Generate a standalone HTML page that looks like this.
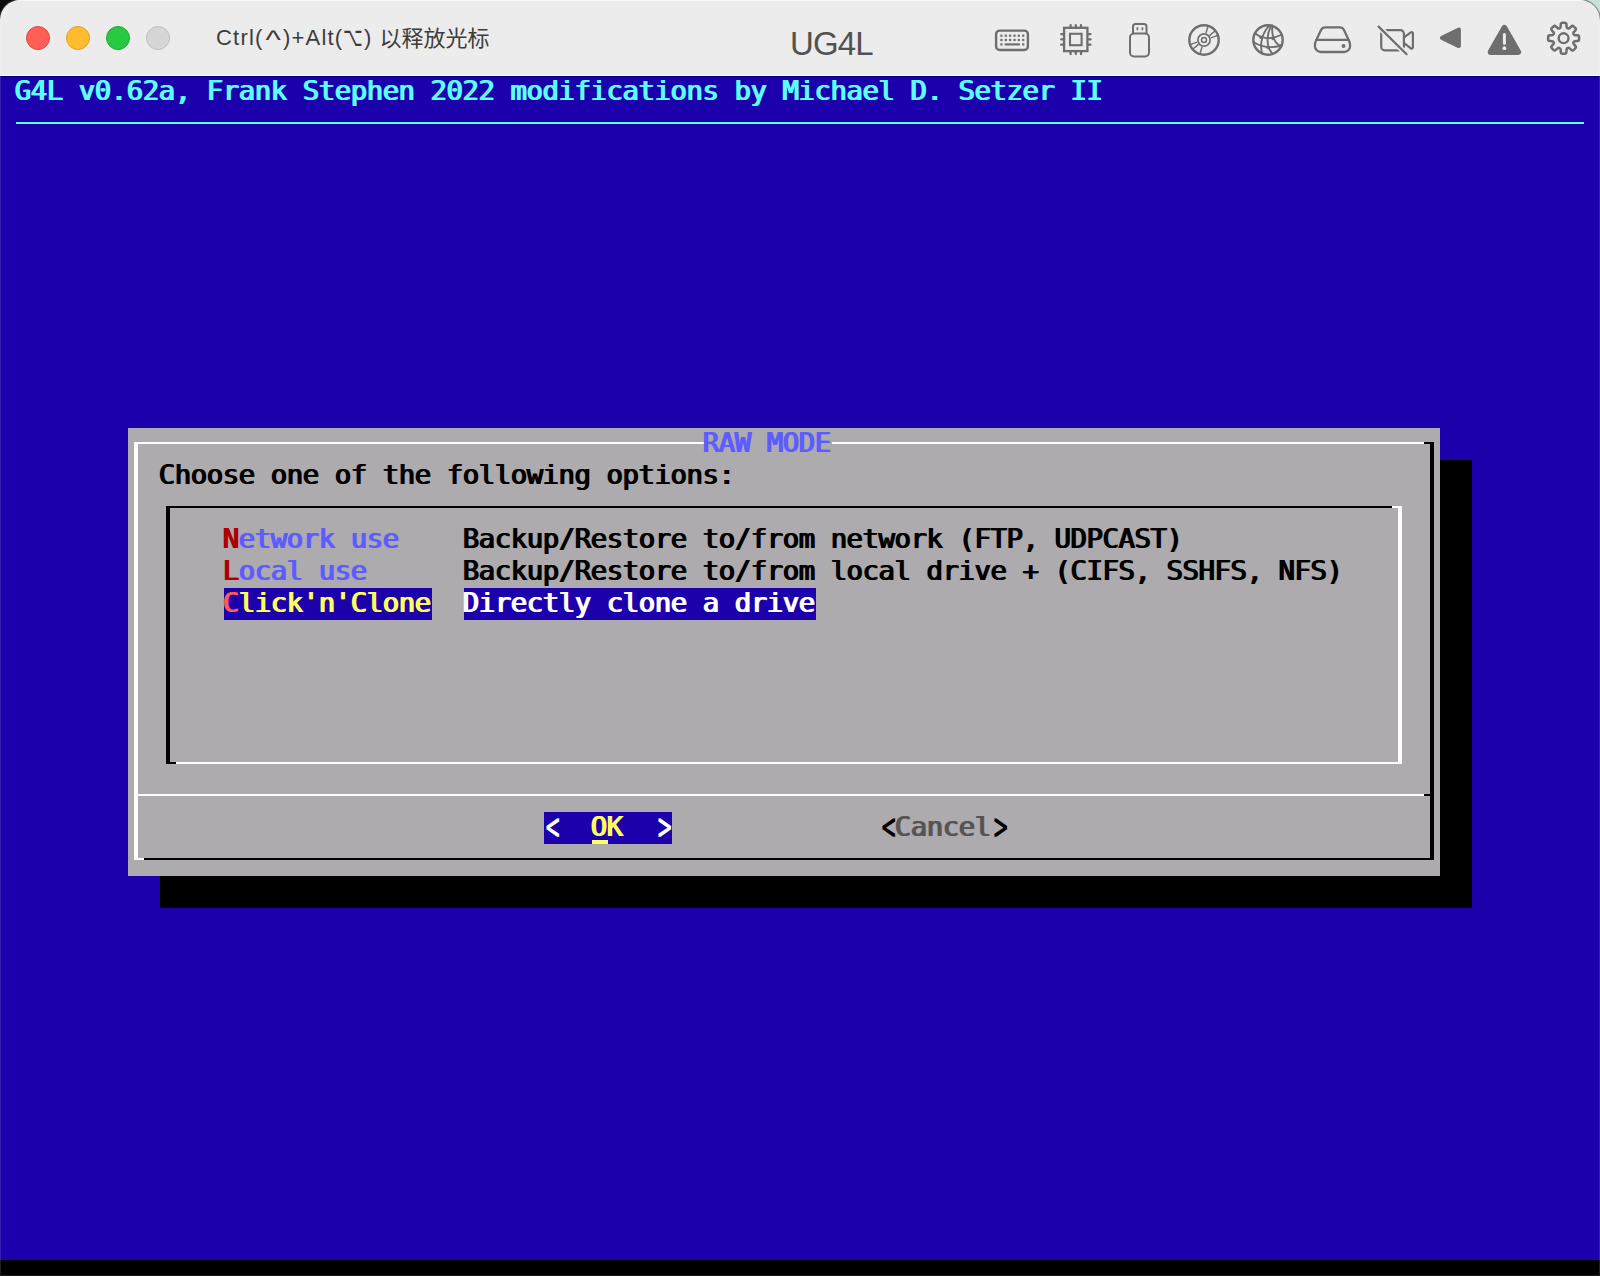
<!DOCTYPE html>
<html lang="zh-CN">
<head>
<meta charset="utf-8">
<title>UG4L</title>
<style>
html,body{margin:0;padding:0;}
body{width:1600px;height:1276px;background:#0c0c0c;overflow:hidden;position:relative;}
#tr{position:absolute;right:0;top:0;width:24px;height:24px;background:#cbdfd6;}
#win{position:absolute;left:0;top:0;width:1600px;height:1276px;background:#000;border-radius:20px 20px 0 0;overflow:hidden;box-shadow:0 0 0 1px rgba(70,90,80,.55);}
#bar{position:absolute;left:0;top:0;width:1600px;height:76px;background:#ececec;box-shadow:inset 0 1px 0 #f9f9f9,inset 0 -1px 0 #fbfbf6;}
.tl{position:absolute;top:26px;width:24px;height:24px;border-radius:50%;box-sizing:border-box;}
#hint{position:absolute;left:216px;top:24px;height:28px;line-height:28px;font-family:"Liberation Sans","Noto Sans CJK SC",sans-serif;font-size:22px;color:#3c3c3c;white-space:nowrap;}
.hs{position:absolute;top:0;}
.sym{font-family:"DejaVu Sans","Liberation Sans",sans-serif;}
#ttl{position:absolute;left:790px;top:24.600px;height:38px;line-height:38px;font-family:"Liberation Sans",sans-serif;font-size:33px;letter-spacing:-0.900px;color:#525252;white-space:nowrap;}
#icons{position:absolute;left:980px;top:0;width:620px;height:76px;}
#scr{position:absolute;left:0;top:76px;width:1600px;height:1184px;background:#1c00ab;overflow:hidden;}
.t{position:absolute;height:32px;line-height:30px;margin:0;white-space:pre;font-family:"DejaVu Sans Mono","Liberation Mono",monospace;font-weight:normal;font-size:27.4px;letter-spacing:-0.496px;text-indent:-2px;text-shadow:1.500px 0 0 currentColor;}
.ab{display:inline-block;text-indent:0;transform:translateX(2px) scale(0.8,1.42);transform-origin:50% 15.200px;}
.b{position:absolute;}
.w{background:#fff;}
.k{background:#000;}
</style>
</head>
<body>
<div id="tr"></div>
<div id="win">
<div id="bar">
<div class="tl" style="left:26px;background:#ff5f57;border:1px solid #e2463f;"></div>
<div class="tl" style="left:66px;background:#febc2e;border:1px solid #e0a028;"></div>
<div class="tl" style="left:106px;background:#28c840;border:1px solid #1fab2f;"></div>
<div class="tl" style="left:146px;background:#d6d6d6;border:1px solid #c0c0c0;"></div>
<div id="hint"><span id="h1" class="hs" style="left:0;letter-spacing:1.2px;">Ctrl(</span><span id="h2" class="hs" style="left:49.600px;top:6px;font-size:32.600px;transform:scaleY(0.77);transform-origin:0 0;">^</span><span id="h3" class="hs" style="left:67px;letter-spacing:1.2px;">)+Alt(</span><span id="h4" class="hs sym" style="left:127.1px;top:-3.2px;font-size:24px;transform:scale(0.71,1.13);transform-origin:0 0;">⌥</span><span id="h5" class="hs" style="left:148px;">)</span><span id="h6" class="hs" style="left:163.500px;top:1px;">以释放光标</span></div>
<div id="ttl">UG4L</div>
<svg id="icons" viewBox="980 0 620 76">
<g fill="none" stroke="#6e6e6e" stroke-width="2" stroke-linecap="round" stroke-linejoin="round">
<!-- keyboard -->
<rect x="996.100" y="30.600" width="31.800" height="19.400" rx="3.600" stroke-width="2.400"/>
<!-- cpu -->
<rect x="1064.100" y="27.800" width="23.300" height="23.300" stroke-width="2.300" stroke-linejoin="miter"/>
<rect x="1070" y="33.800" width="11.600" height="11.400" stroke-width="2.100" stroke-linejoin="miter"/>
<g stroke-linecap="round" stroke-width="2.300">
<path d="M1070.600 25.200v2M1075.800 25.200v2M1081 25.200v2M1070.600 52v2M1075.800 52v2M1081 52v2"/>
<path d="M1061.200 34.100h2M1061.200 39.400h2M1061.200 44.700h2M1088.500 34.100h2M1088.500 39.400h2M1088.500 44.700h2"/>
</g>
<!-- usb -->
<path d="M1133 33v-6.5a2.5 2.5 0 0 1 2.5-2.500h8.500a2.500 2.500 0 0 1 2.500 2.500v6.500"/>
<rect x="1130" y="33.500" width="19" height="23" rx="4"/>
<path d="M1137.400 27.200v3M1142.400 27.200v3" stroke-width="1.600" stroke-linecap="butt"/>
<!-- disc -->
<circle cx="1204" cy="40" r="14.700" stroke-width="2.400"/>
<circle cx="1204" cy="40" r="6.100" stroke-width="1.700"/>
<circle cx="1204" cy="40" r="2.500" stroke-width="1.500"/>
<g stroke-width="1.400" stroke-linecap="butt">
<path d="M1205.900 33.300L1207.900 26.500M1209.400 35.600L1214.700 31.300M1210.700 37.800L1217.200 35.700"/>
<path d="M1202.100 46.700L1200.100 53.500M1198.600 44.400L1193.300 48.700M1197.300 42.200L1190.800 44.300"/>
</g>
<!-- globe -->
<circle cx="1268" cy="40" r="14.700" stroke-width="2.400"/>
<g stroke-width="1.900">
<path d="M1269.600 25.400C1263 32 1259 43 1262.200 53.500"/>
<path d="M1271.100 25.400C1266.500 35 1266 46 1271.900 53.100"/>
<path d="M1272.300 25.400C1271.500 36 1274 43 1281 46.300"/>
<path d="M1255 33.200Q1266 42 1281 35"/>
<path d="M1253.900 42.200Q1266 50 1281.500 45.500"/>
</g>
<!-- drive -->
<path d="M1321 30Q1322.300 27.300 1325.200 27.300H1339.800Q1342.700 27.300 1344 30L1349.300 41.400Q1350.100 43.200 1350.100 45.400V46a6 6 0 0 1 -6 6H1320.900a6 6 0 0 1 -6 -6V45.400Q1314.900 43.200 1315.700 41.400Z" stroke-width="2.300"/>
<path d="M1316.300 39.900H1348.700" stroke-width="2.200"/>
<!-- camera slash -->
<rect x="1381.200" y="30.100" width="22.700" height="20.300" rx="3.600" stroke-width="2.200"/>
<path d="M1404.800 36.800L1410.800 32.300a1.300 1.300 0 0 1 2.100 1v14a1.300 1.300 0 0 1 -2.100 1L1404.800 43.600" stroke-width="2.200"/>
<path d="M1379.600 27.600L1405.600 53.200" stroke="#ececec" stroke-width="5.600" stroke-linecap="butt"/>
<path d="M1378.600 26.600L1406.600 54.200" stroke-width="2.200"/>
<!-- gear -->
<path d="M1559.53 28.37Q1560.56 27.94 1560.63 26.74L1560.77 24.44Q1560.87 22.74 1562.57 22.74L1564.63 22.74Q1566.33 22.74 1566.43 24.44L1566.57 26.74Q1566.64 27.94 1567.67 28.37L1567.67 28.37Q1568.71 28.80 1569.60 28.00L1571.33 26.47Q1572.61 25.34 1573.81 26.54L1575.26 27.99Q1576.46 29.19 1575.33 30.47L1573.80 32.20Q1573.00 33.09 1573.43 34.13L1573.43 34.13Q1573.86 35.16 1575.06 35.23L1577.36 35.37Q1579.06 35.47 1579.06 37.17L1579.06 39.23Q1579.06 40.93 1577.36 41.03L1575.06 41.17Q1573.86 41.24 1573.43 42.27L1573.43 42.27Q1573.00 43.31 1573.80 44.20L1575.33 45.93Q1576.46 47.21 1575.26 48.41L1573.81 49.86Q1572.61 51.06 1571.33 49.93L1569.60 48.40Q1568.71 47.60 1567.67 48.03L1567.67 48.03Q1566.64 48.46 1566.57 49.66L1566.43 51.96Q1566.33 53.66 1564.63 53.66L1562.57 53.66Q1560.87 53.66 1560.77 51.96L1560.63 49.66Q1560.56 48.46 1559.53 48.03L1559.53 48.03Q1558.49 47.60 1557.60 48.40L1555.87 49.93Q1554.59 51.06 1553.39 49.86L1551.94 48.41Q1550.74 47.21 1551.87 45.93L1553.40 44.20Q1554.20 43.31 1553.77 42.27L1553.77 42.27Q1553.34 41.24 1552.14 41.17L1549.84 41.03Q1548.14 40.93 1548.14 39.23L1548.14 37.17Q1548.14 35.47 1549.84 35.37L1552.14 35.23Q1553.34 35.16 1553.77 34.13L1553.77 34.13Q1554.20 33.09 1553.40 32.20L1551.87 30.47Q1550.74 29.19 1551.94 27.99L1553.39 26.54Q1554.59 25.34 1555.87 26.47L1557.60 28.00Q1558.49 28.80 1559.53 28.37z" stroke-width="2.500"/>
<circle cx="1563.6" cy="38.2" r="4.900" stroke-width="2.400"/>
</g>
<g fill="#6e6e6e">
<!-- keyboard keys -->
<g>
<rect x="1000.300" y="34.600" width="2.200" height="2.200"/><rect x="1004.700" y="34.600" width="2.200" height="2.200"/><rect x="1009" y="34.600" width="2.200" height="2.200"/><rect x="1013.400" y="34.600" width="2.200" height="2.200"/><rect x="1017.700" y="34.600" width="2.200" height="2.200"/><rect x="1022.100" y="34.600" width="2.200" height="2.200"/>
<rect x="1000.300" y="38.900" width="2.200" height="2.200"/><rect x="1004.700" y="38.900" width="2.200" height="2.200"/><rect x="1009" y="38.900" width="2.200" height="2.200"/><rect x="1013.400" y="38.900" width="2.200" height="2.200"/><rect x="1017.700" y="38.900" width="2.200" height="2.200"/><rect x="1022.100" y="38.900" width="2.200" height="2.200"/>
<rect x="1000.300" y="43.300" width="2.200" height="2.200"/><rect x="1004.700" y="43.300" width="15.200" height="2.200"/><rect x="1022.100" y="43.300" width="2.200" height="2.200"/>
</g>
<!-- globe nodes -->
<circle cx="1260.900" cy="37.300" r="1.700"/><circle cx="1273" cy="38.600" r="1.700"/><circle cx="1268" cy="47.400" r="1.700"/><circle cx="1280.300" cy="46" r="1.700"/>
<!-- drive dot -->
<circle cx="1343.500" cy="46" r="2"/>
<!-- play left -->
<path d="M1441.900 37.850L1458.900 29.500V46.100z" stroke="#6e6e6e" stroke-width="4" stroke-linejoin="round"/>
<!-- warning -->
<path d="M1504.400 27.900L1518.100 51.900H1490.700z" stroke="#6e6e6e" stroke-width="6" stroke-linejoin="round"/>
</g>
<g fill="#ececec">
<rect x="1502.900" y="33" width="3" height="11.800" rx="1.500"/>
<circle cx="1504.400" cy="48.200" r="1.900"/>
</g>
</svg>
</div>
<div id="scr">
<pre class="t" style="left:16px;top:0;color:#5cffff;">G4L v0.62a, Frank Stephen 2022 modifications by Michael D. Setzer II</pre>
<div class="b" style="left:16px;top:46px;width:1568px;height:2px;background:#5cffff;"></div>
<div class="b k" style="left:160px;top:384px;width:1312px;height:448px;"></div>
<div id="dlg" class="b" style="left:128px;top:352px;width:1312px;height:448px;background:#adabad;"></div>
<!-- outer border -->
<div class="b w" style="left:134px;top:366px;width:1290px;height:2px;"></div>
<div class="b w" style="left:134px;top:366px;width:4px;height:418px;"></div>
<div class="b w" style="left:134px;top:782px;width:10px;height:2px;"></div>
<div class="b k" style="left:144px;top:782px;width:1290px;height:2px;"></div>
<div class="b k" style="left:1424px;top:366px;width:10px;height:2px;"></div>
<div class="b k" style="left:1430px;top:366px;width:4px;height:418px;"></div>
<div class="b w" style="left:138px;top:718px;width:1286px;height:2px;"></div>
<div class="b k" style="left:1424px;top:718px;width:6px;height:2px;"></div>
<!-- inner box -->
<div class="b k" style="left:166px;top:430px;width:1226px;height:2px;"></div>
<div class="b k" style="left:166px;top:430px;width:4px;height:258px;"></div>
<div class="b k" style="left:166px;top:686px;width:10px;height:2px;"></div>
<div class="b w" style="left:176px;top:686px;width:1226px;height:2px;"></div>
<div class="b w" style="left:1392px;top:430px;width:10px;height:2px;"></div>
<div class="b w" style="left:1398px;top:430px;width:4px;height:258px;"></div>
<!-- texts -->
<pre class="t" style="left:704px;top:352px;width:128px;background:#adabad;color:#5c5cff;">RAW MODE</pre>
<pre class="t" style="left:160px;top:384px;color:#000;">Choose one of the following options:</pre>
<pre class="t" style="left:224px;top:448px;color:#5c5cff;"><span style="color:#ab0000;">N</span>etwork use</pre>
<pre class="t" style="left:464px;top:448px;color:#000;">Backup/Restore to/from network (FTP, UDPCAST)</pre>
<pre class="t" style="left:224px;top:480px;color:#5c5cff;"><span style="color:#ab0000;">L</span>ocal use</pre>
<pre class="t" style="left:464px;top:480px;color:#000;">Backup/Restore to/from local drive + (CIFS, SSHFS, NFS)</pre>
<pre class="t" style="left:224px;top:512px;width:208px;background:#1c00ab;color:#ffff5c;"><span style="color:#ff5b50;">C</span>lick'n'Clone</pre>
<pre class="t" style="left:464px;top:512px;width:352px;background:#1c00ab;color:#fff;">Directly clone a drive</pre>
<pre class="t" style="left:544px;top:736px;width:128px;background:#1c00ab;color:#fff;"><span class="ab">&lt;</span>  <span style="color:#ffff5c;">OK</span>  <span class="ab">&gt;</span></pre>
<div class="b" style="left:592px;top:764px;width:16px;height:4px;background:#ffff5c;"></div>
<pre class="t" style="left:880px;top:736px;color:#000;"><span class="ab">&lt;</span><span style="color:#555;">Cancel</span><span class="ab">&gt;</span></pre>
</div>
<div class="b" style="left:0;top:76px;width:1600px;height:1px;background:#0b0082;"></div>
<div class="b" style="left:0;top:20px;width:1px;height:1256px;background:rgba(255,255,255,.12);"></div>
<div class="b" style="left:1599px;top:20px;width:1px;height:1256px;background:rgba(255,255,255,.12);"></div>
<div class="b" style="left:0;top:1275px;width:1600px;height:1px;background:#1c1c1c;"></div>
</div>
</body>
</html>
